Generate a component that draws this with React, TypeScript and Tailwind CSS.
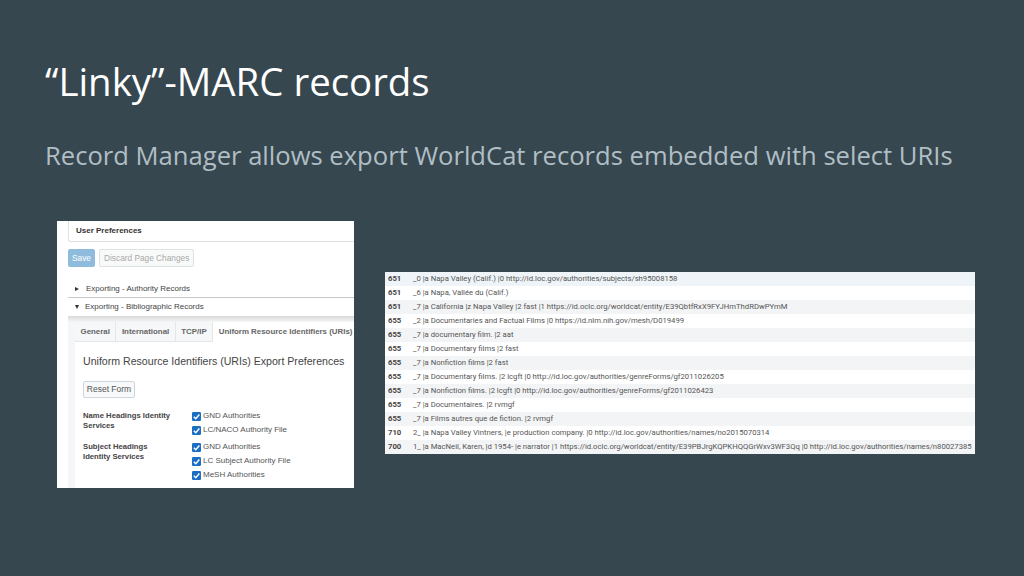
import React from 'react';

const RECORDS = [
    { tag: "651", text: "_0 |a Napa Valley (Calif.) |0 http://id.loc.gov/authorities/subjects/sh95008158" },
    { tag: "651", text: "_6 |a Napa, Vallée du (Calif.)" },
    { tag: "651", text: "_7 |a California |z Napa Valley |2 fast |1 https://id.oclc.org/worldcat/entity/E39QbtfRxX9FYJHmThdRDwPYmM" },
    { tag: "655", text: "_2 |a Documentaries and Factual Films |0 https://id.nlm.nih.gov/mesh/D019499" },
    { tag: "655", text: "_7 |a documentary film. |2 aat" },
    { tag: "655", text: "_7 |a Documentary films |2 fast" },
    { tag: "655", text: "_7 |a Nonfiction films |2 fast" },
    { tag: "655", text: "_7 |a Documentary films. |2 lcgft |0 http://id.loc.gov/authorities/genreForms/gf2011026205" },
    { tag: "655", text: "_7 |a Nonfiction films. |2 lcgft |0 http://id.loc.gov/authorities/genreForms/gf2011026423" },
    { tag: "655", text: "_7 |a Documentaires. |2 rvmgf" },
    { tag: "655", text: "_7 |a Films autres que de fiction. |2 rvmgf" },
    { tag: "710", text: "2_ |a Napa Valley Vintners, |e production company. |0 http://id.loc.gov/authorities/names/no2015070314" },
    { tag: "700", text: "1_ |a MacNeil, Karen, |d 1954- |e narrator |1 https://id.oclc.org/worldcat/entity/E39PBJrgKQPKHQQGrWxv3WF3Qq |0 http://id.loc.gov/authorities/names/n80027385" },
];

const Check = ({ label }: { label: string }) => (
    <div className="flex items-center gap-[2px] h-[14px]">
        <svg width="9" height="9" viewBox="0 0 10 10" className="shrink-0">
            <rect width="10" height="10" rx="1.5" fill="#1a6fc4" />
            <path d="M2 5.2 L4.2 7.4 L8.2 2.8" fill="none" stroke="#fff" strokeWidth="1.6" />
        </svg>
        <span>{label}</span>
    </div>
);

const Tab = ({ label, active }: { label: string; active?: boolean }) => (
    <div className={`h-[20px] flex items-center px-[5.5px] border-r border-[#e4e6e8] ${active ? 'bg-white' : 'bg-[#f6f7f8] border-b'}`}>{label}</div>
);

const App: React.FC = () => {
    return (
        <div className="w-[1024px] h-[576px] overflow-hidden bg-[#37474f] font-['Open_Sans',sans-serif]">
            <h1 className="pl-[45px] pt-[56px] text-[38.4px] leading-[50px] font-normal text-white whitespace-nowrap">“Linky”-MARC records</h1>
            <p className="pl-[45px] pt-[33px] text-[25.6px] leading-[34px] font-normal text-[#b0bec5] whitespace-nowrap">Record Manager allows export WorldCat records embedded with select URIs</p>

            <div className="flex items-start pl-[57px] pt-[48px] font-['Liberation_Sans',sans-serif]">
                <div className="w-[297px] h-[267px] bg-white overflow-hidden text-[#666]">
                    <div className="ml-[11px] h-[21px] pl-[7px] flex items-center border-b border-l border-[#dfe1e3] rounded-bl-[3px] text-[8px] font-bold text-[#333]">User Preferences</div>
                    <div className="flex gap-[4px] mt-[7px] ml-[11px] text-[8.3px]">
                        <div className="w-[27px] h-[18px] bg-[#8fbcdc] rounded-[2px] text-white flex items-center justify-center">Save</div>
                        <div className="h-[18px] px-[4px] border border-[#dfe2e4] rounded-[2px] bg-[#f8f9f9] text-[#aaa] flex items-center">Discard Page Changes</div>
                    </div>
                    <div className="mt-[14px] ml-[11px] h-[17px] pl-[7px] flex items-center gap-[7px] border-b border-[#c8c8c8] text-[8px] text-[#444]">
                        <span className="w-0 h-0 border-y-[2.5px] border-y-transparent border-l-[4px] border-l-[#333]"></span>
                        <span>Exporting - Authority Records</span>
                    </div>
                    <div className="ml-[11px] h-[18px] pl-[7px] flex items-center gap-[6px] text-[8px] text-[#444]">
                        <span className="w-0 h-0 border-x-[2.5px] border-x-transparent border-t-[4px] border-t-[#333]"></span>
                        <span>Exporting - Bibliographic Records</span>
                    </div>
                    <div className="ml-[11px] h-[6px] bg-gradient-to-b from-[#d9d9d9] to-[#f5f6f7]"></div>
                    <div className="ml-[11px] pl-[7px] bg-[#f5f6f7]">
                        <div className="bg-white">
                            <div className="flex text-[7.9px] font-bold text-[#666] whitespace-nowrap">
                                <Tab label="General" />
                                <Tab label="International" />
                                <Tab label="TCP/IP" />
                                <Tab label="Uniform Resource Identifiers (URIs)" active />
                            </div>
                            <div className="pl-[8px] pt-[12px] pb-[40px]">
                                <div className="text-[10.6px] leading-[14px] text-[#444] whitespace-nowrap">Uniform Resource Identifiers (URIs) Export Preferences</div>
                                <div className="mt-[13px] w-[52px] h-[17px] border border-[#cfd6db] rounded-[2px] bg-[#f7f9fa] flex items-center justify-center text-[8.5px] text-[#555]">Reset Form</div>
                                <div className="flex mt-[11px] text-[8px]">
                                    <div className="w-[109px] text-[7.7px] font-bold text-[#444] leading-[10px] pt-[2px]">Name Headings Identity<br />Services</div>
                                    <div className="text-[#555]">
                                        <Check label="GND Authorities" />
                                        <Check label="LC/NACO Authority File" />
                                    </div>
                                </div>
                                <div className="flex mt-[3px] text-[8px]">
                                    <div className="w-[109px] text-[7.7px] font-bold text-[#444] leading-[10px] pt-[2px]">Subject Headings<br />Identity Services</div>
                                    <div className="text-[#555]">
                                        <Check label="GND Authorities" />
                                        <Check label="LC Subject Authority File" />
                                        <Check label="MeSH Authorities" />
                                    </div>
                                </div>
                            </div>
                        </div>
                    </div>
                </div>

                <div className="ml-[31px] mt-[51px] w-[590px] font-['Roboto',sans-serif] text-[7.7px] text-[#555]">
                    {RECORDS.map((r, i) => (
                        <div key={i} className={`h-[14px] flex items-center whitespace-nowrap ${i === 0 ? 'bg-[#eef4f8]' : i % 2 === 0 ? 'bg-[#f3f4f5]' : 'bg-white'}`}>
                            <span className="w-[28px] shrink-0 pl-[3px] font-bold text-[#444]">{r.tag}</span>
                            <span>{r.text}</span>
                        </div>
                    ))}
                </div>
            </div>
        </div>
    );
};

export default App;
